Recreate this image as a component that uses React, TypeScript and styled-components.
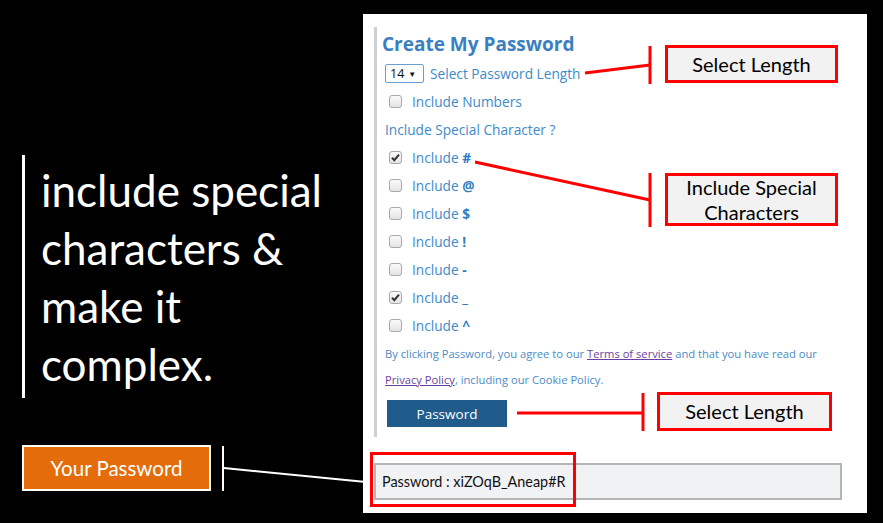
import React from "react";
import styled, { createGlobalStyle } from "styled-components";

const GlobalStyle = createGlobalStyle`
  html, body {
    margin: 0;
    padding: 0;
    background: #000;
  }
`;

const SPECIALS = [
  { ch: "#", checked: true },
  { ch: "@", checked: false },
  { ch: "$", checked: false },
  { ch: "!", checked: false },
  { ch: "-", checked: false },
  { ch: "_", checked: true },
  { ch: "^", checked: false },
];

const CALLOUTS = [
  { x: 665, y: 45, w: 173, h: 38, lines: ["Select Length"] },
  { x: 665, y: 173, w: 173, h: 53, lines: ["Include Special", "Characters"] },
  { x: 657, y: 392, w: 175, h: 39, lines: ["Select Length"] },
];

function Check({ checked }: { checked?: boolean }) {
  return (
    <Box>
      {checked && (
        <svg width="11" height="11" viewBox="0 0 11 11">
          <path d="M2 5.8 L4.3 8.2 L9 2.6" fill="none" stroke="#333" strokeWidth="2" />
        </svg>
      )}
    </Box>
  );
}

function Connectors() {
  return (
    <Lines width="883" height="523" viewBox="0 0 883 523">
      <g stroke="#ff0000" strokeWidth="3" fill="none">
        <line x1="585" y1="73" x2="650" y2="65" />
        <line x1="650" y1="46" x2="650" y2="84" />
        <line x1="475" y1="162" x2="650" y2="200" />
        <line x1="650" y1="173" x2="650" y2="227" />
        <line x1="517" y1="413" x2="643" y2="413" />
        <line x1="643" y1="393" x2="643" y2="431" />
        <rect x="371.5" y="453.5" width="203" height="52" />
      </g>
      <g stroke="#ffffff" strokeWidth="2" fill="none">
        <line x1="223" y1="446" x2="223" y2="491" />
        <line x1="224" y1="468" x2="366" y2="482" />
      </g>
    </Lines>
  );
}

export default function App() {
  return (
    <>
      <GlobalStyle />
      <Slide>
        <LeftColumn>
          <Quote>
            include special
            <br />
            characters &amp;
            <br />
            make it
            <br />
            complex.
          </Quote>
          <OrangeButton>Your Password</OrangeButton>
        </LeftColumn>

        <Panel>
          <FormCard>
            <Title>Create My Password</Title>
            <SelectRow>
              <FakeSelect>
                14 <Arrow>▼</Arrow>
              </FakeSelect>
              <Label>Select Password Length</Label>
            </SelectRow>
            <Row>
              <Check />
              <Label>Include Numbers</Label>
            </Row>
            <Row>
              <Heading>Include Special Character ?</Heading>
            </Row>
            {SPECIALS.map((s) => (
              <Row key={s.ch}>
                <Check checked={s.checked} />
                <Label>
                  Include <Sym>{s.ch}</Sym>
                </Label>
              </Row>
            ))}
            <Legal>
              By clicking Password, you agree to our <Link>Terms of service</Link> and that you have read our
              <br />
              <Link>Privacy Policy</Link>, including our Cookie Policy.
            </Legal>
            <SubmitButton>Password</SubmitButton>
          </FormCard>
          <Output>Password : xiZOqB_Aneap#R</Output>
        </Panel>

        <Connectors />
        {CALLOUTS.map((c, i) => (
          <Callout key={i} style={{ left: c.x, top: c.y, width: c.w, height: c.h }}>
            {c.lines.map((l) => (
              <span key={l}>{l}</span>
            ))}
          </Callout>
        ))}
      </Slide>
    </>
  );
}

const Slide = styled.div`
  position: relative;
  width: 883px;
  height: 523px;
  background: #000;
  display: flex;
  overflow: hidden;
`;

const LeftColumn = styled.div`
  width: 363px;
  display: flex;
  flex-direction: column;
  align-items: flex-start;
  padding-left: 22px;
  box-sizing: border-box;
`;

const Quote = styled.div`
  margin-top: 155px;
  height: 243px;
  box-sizing: border-box;
  border-left: 3px solid #fff;
  padding: 6px 0 0 16px;
  color: #fff;
  font-family: Lato, "Open Sans", sans-serif;
  font-size: 44px;
  line-height: 58px;
  white-space: nowrap;
`;

const OrangeButton = styled.div`
  margin-top: 47px;
  width: 189px;
  height: 46px;
  box-sizing: border-box;
  border: 2px solid #fff;
  background: #e46c0a;
  color: #fff;
  font-family: Lato, "Open Sans", sans-serif;
  font-size: 20.5px;
  display: flex;
  align-items: center;
  justify-content: center;
`;

const Panel = styled.div`
  margin-top: 14px;
  width: 504px;
  height: 499px;
  background: #fff;
  display: flex;
  flex-direction: column;
  padding-left: 11px;
  box-sizing: border-box;
`;

const FormCard = styled.div`
  margin-top: 13px;
  height: 410px;
  box-sizing: border-box;
  border-left: 3px solid #cdd0d2;
  padding: 5px 0 0 8px;
  display: flex;
  flex-direction: column;
  align-items: flex-start;
  font-family: "Open Sans", sans-serif;
`;

const Title = styled.div`
  margin-left: -3px;
  height: 24px;
  line-height: 24px;
  font-size: 19px;
  font-weight: 700;
  color: #3a7fc0;
`;

const Row = styled.div`
  height: 28px;
  display: flex;
  align-items: center;
`;

const SelectRow = styled(Row)`
  margin-top: 3px;
`;

const FakeSelect = styled.div`
  width: 39px;
  height: 19px;
  box-sizing: border-box;
  border: 1px solid #6a9fd6;
  border-radius: 2px;
  font-size: 12.5px;
  color: #111;
  display: flex;
  align-items: center;
  padding-left: 4px;
  gap: 4px;
  margin-right: 6px;
`;

const Arrow = styled.span`
  font-size: 8px;
`;

const Box = styled.span`
  width: 13px;
  height: 13px;
  box-sizing: border-box;
  border: 1px solid #a9a9a9;
  border-radius: 3px;
  background: linear-gradient(#fafafa, #e4e4e4);
  margin: 0 10px 0 4px;
  display: flex;
  align-items: center;
  justify-content: center;
`;

const Label = styled.span`
  font-size: 13.7px;
  color: #3d8ac9;
`;

const Heading = styled(Label)``;

const Sym = styled.b`
  color: #2f7cbf;
`;

const Legal = styled.div`
  margin-top: 2px;
  font-size: 11.2px;
  line-height: 26px;
  color: #4a8cc6;
  white-space: nowrap;
`;

const Link = styled.span`
  color: #6b3fa0;
  text-decoration: underline;
`;

const SubmitButton = styled.div`
  margin-top: 7px;
  margin-left: 2px;
  width: 120px;
  height: 27px;
  background: #1f5c8b;
  color: #fff;
  font-size: 13.5px;
  display: flex;
  align-items: center;
  justify-content: center;
`;

const Output = styled.div`
  margin-top: 26px;
  width: 468px;
  height: 37px;
  box-sizing: border-box;
  border: 2px solid #b3b6b8;
  background: #f1f2f4;
  padding-left: 6px;
  display: flex;
  align-items: center;
  font-family: Lato, "Open Sans", sans-serif;
  font-size: 14.4px;
  color: #111;
`;

const Lines = styled.svg`
  position: absolute;
  left: 0;
  top: 0;
  pointer-events: none;
`;

const Callout = styled.div`
  position: absolute;
  box-sizing: border-box;
  border: 3px solid #ff0000;
  background: #f2f2f2;
  display: flex;
  flex-direction: column;
  align-items: center;
  justify-content: center;
  font-family: Lato, "Open Sans", sans-serif;
  font-size: 20px;
  line-height: 25px;
  color: #000;
`;
